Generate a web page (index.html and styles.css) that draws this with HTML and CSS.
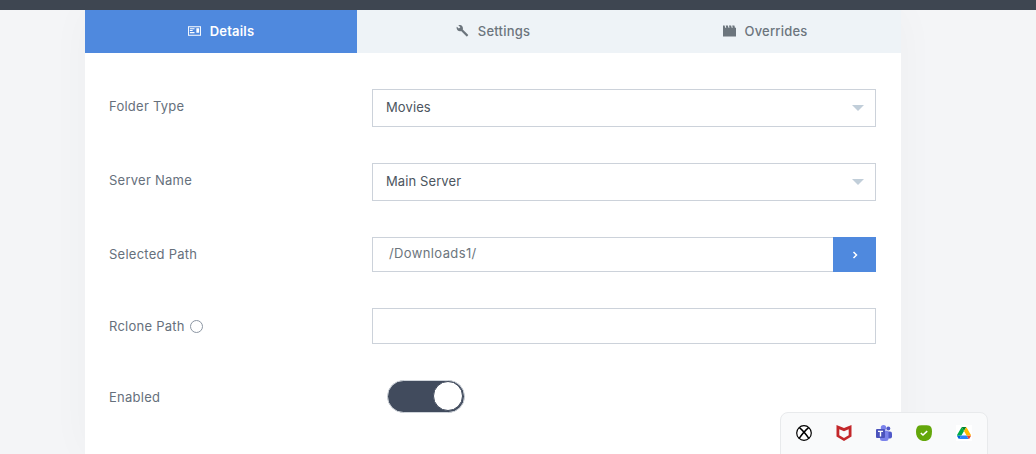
FILE: index.html
```html
<!DOCTYPE html>
<html lang="en">
<head>
<meta charset="utf-8">
<title>Details</title>
<link rel="stylesheet" href="styles.css">
</head>
<body>
<header class="topbar"></header>
<main class="card">
  <nav class="tabs">
    <a class="tab tab-active">
      <svg class="tab-icon" viewBox="0 0 14 12"><path fill="currentColor" fill-rule="evenodd" d="M0 1h14v10H0zM1 2v8h12V2zM2 3h5v1H2zM2 5h3v1H2zM2 7h5v1.500H2zM9 3h3v5H9z"/></svg>
      <span>Details</span>
    </a>
    <a class="tab">
      <svg class="tab-icon" viewBox="0 0 14 14"><path fill="currentColor" d="M13.500 11.300 7.300 5.200c.5-1.500.2-3-1-4.200C5.100-.1 3.500-.3 2.200.2l2.300 2.300-1.700 1.700L.4 1.900C-.2 3.200.1 4.900 1.200 6c1.200 1.200 2.800 1.500 4.200 1l6.100 6.200c.3.300.8.300 1 0l.9-.9c.3-.3.300-.7.100-1z"/></svg>
      <span>Settings</span>
    </a>
    <a class="tab">
      <svg class="tab-icon" viewBox="0 0 12 10"><path fill="currentColor" d="M0 0h1.500l.5 2h1L2.500 0h2l.5 2h1L5.500 0h2L8 2h1L8.500 0h2l.5 2h1v8H0z"/></svg>
      <span>Overrides</span>
    </a>
  </nav>
  <form class="form">
    <div class="row row-select">
      <label class="label label-select">Folder Type</label>
      <div class="field select"><span>Movies</span><i class="caret"></i></div>
    </div>
    <div class="row row-select">
      <label class="label label-select">Server Name</label>
      <div class="field select"><span>Main Server</span><i class="caret"></i></div>
    </div>
    <div class="row row-path">
      <label class="label">Selected Path</label>
      <div class="path">
        <div class="field path-input"><span>/Downloads1/</span></div>
        <button class="path-btn" type="button"><svg viewBox="0 0 6 8"><path d="M1.500 1 4.500 4 1.500 7" fill="none" stroke="#fff" stroke-width="1.500"/></svg></button>
      </div>
    </div>
    <div class="row row-rclone">
      <label class="label label-rclone">Rclone Path <i class="help"></i></label>
      <div class="field rclone"></div>
    </div>
    <div class="row row-toggle">
      <label class="label label-enabled">Enabled</label>
      <div class="toggle"><i class="knob"></i></div>
    </div>
  </form>
</main>
<aside class="tray">
  <svg class="tray-icon" viewBox="0 0 16 16"><circle cx="8" cy="8" r="7.300" fill="#fff" stroke="#000" stroke-width="1.200"/><path d="M3.400 2.600C5.500 4.300 10.300 9.700 13 13.600M12.600 2.600C10.500 4.300 5.700 9.700 3 13.600" fill="none" stroke="#000" stroke-width="1.500"/></svg>
  <svg class="tray-icon" viewBox="0 0 16 16"><path fill="#c3272b" d="M.5 0 8 3l7.500-3v11.500L8 16 .5 11.500zM3.300 4.300v5.900L8 13l4.700-2.800V4.300L8 6.300z"/></svg>
  <svg class="tray-icon" viewBox="0 0 16 16"><circle cx="12.300" cy="3.500" r="2" fill="#5059c9"/><circle cx="7.500" cy="2.700" r="2.700" fill="#7b83eb"/><rect x="10" y="6.500" width="6" height="7" rx="2" fill="#5059c9"/><rect x="4" y="5.500" width="8.500" height="10.500" rx="2.500" fill="#7b83eb"/><rect x="0" y="4" width="9" height="9" rx="1" fill="#4b53bc"/><path fill="#fff" d="M2 5.800h5v1.200H5.200v4.500H3.800V7H2z"/></svg>
  <svg class="tray-icon" viewBox="0 0 16 16"><path fill="#64a70b" d="M3 .5C6 0 11 0 13 .5s3 3 3 6c0 4-1 7-3.500 8.500s-6 1.500-8.500 0S0 10.500 0 7 1 1 3 .5z"/><path fill="none" stroke="#fff" stroke-width="1.600" d="M4.800 8 7 10l4.200-3.800"/></svg>
  <div class="drive-tile"><svg class="drive" viewBox="0 0 87.300 78"><path d="m6.600 66.850 3.850 6.650c.8 1.400 1.950 2.500 3.300 3.300l13.750-23.800h-27.500c0 1.550.4 3.100 1.200 4.500z" fill="#0066da"/><path d="m43.650 25-13.750-23.800c-1.350.8-2.500 1.900-3.300 3.300l-25.400 44a9.060 9.060 0 0 0 -1.200 4.500h27.500z" fill="#00ac47"/><path d="m73.550 76.800c1.350-.8 2.500-1.900 3.300-3.300l1.600-2.750 7.650-13.250c.8-1.400 1.200-2.950 1.200-4.500h-27.502l5.852 11.500z" fill="#ea4335"/><path d="m43.650 25 13.750-23.800c-1.350-.8-2.900-1.200-4.500-1.200h-18.500c-1.600 0-3.150.45-4.500 1.200z" fill="#00832d"/><path d="m59.800 53h-32.300l-13.750 23.800c1.350.8 2.900 1.200 4.500 1.200h50.800c1.600 0 3.150-.45 4.500-1.200z" fill="#2684fc"/><path d="m73.400 26.500-12.700-22c-.8-1.400-1.950-2.500-3.300-3.300l-13.750 23.800 16.150 28h27.450c0-1.550-.4-3.100-1.200-4.500z" fill="#ffba00"/></svg></div>
</aside>
</body>
</html>
```

FILE: styles.css
```css
* { box-sizing: border-box; }
html, body { margin: 0; height: 100%; }
body {
  width: 1036px;
  height: 454px;
  overflow: hidden;
  position: relative;
  background: #f4f5f7;
  font-family: "Inter", "Liberation Sans", sans-serif;
  font-size: 13px;
  color: #6c757d;
}
.topbar { height: 10px; background: #3e4651; position: relative; z-index: 1; }
.card { width: 816px; margin-left: 85px; background: #fff; height: 444px; box-shadow: 0 0 40px rgba(60, 60, 60, .03); }
.tabs { display: grid; grid-template-columns: 272px 272px 272px; height: 43px; background: #eef3f7; }
.tab { display: flex; align-items: center; justify-content: center; gap: 9px; font-weight: 500; color: #6c757d; letter-spacing: .2px; padding-bottom: 2px; }
.tab-active { background: #4f89de; color: #fff; font-weight: 600; }
.tab-icon { width: 13px; height: 12px; }
.form { padding: 36px 25px 0 24px; }
.row { display: grid; grid-template-columns: 263px 504px; align-items: center; }
.row-select { height: 38px; margin-bottom: 36px; }
.row-path { height: 35px; margin-bottom: 36px; }
.row-rclone { height: 36px; margin-bottom: 35px; }
.row-toggle { height: 34px; }
.label { display: flex; align-items: center; gap: 5px; font-weight: 400; color: #66707c; letter-spacing: .25px; position: relative; top: -1px; }
.label-select { top: -2px; }
.label-rclone { top: 0; }
.label-enabled { top: 1px; }
.field { height: 100%; border: 1px solid #ccd2da; background: #fff; color: #4c5560; display: flex; align-items: center; letter-spacing: .1px; padding-bottom: 2px; }
.select { padding: 0 11px 2px 13px; justify-content: space-between; }
.caret { width: 0; height: 0; border-left: 6px solid transparent; border-right: 6px solid transparent; border-top: 6px solid #c1ced9; position: relative; top: 1px; }
.path { display: flex; height: 100%; }
.path-input { flex: 1; padding-left: 16px; padding-bottom: 4px; border-right: 0; color: #6c757d; letter-spacing: .38px; }
.path-btn { width: 43px; border: 0; padding: 0; background: #4f89de; display: flex; align-items: center; justify-content: center; }
.path-btn svg { width: 6px; height: 8px; }
.help { width: 13px; height: 13px; border: 1px solid #8c96a3; border-radius: 50%; }
.toggle { width: 78px; height: 33px; margin-left: 15px; border-radius: 17px; background: #414b5d; border: 1px solid #cfd4da; display: flex; justify-content: flex-end; align-items: center; padding-right: 1px; }
.knob { width: 30px; height: 30px; border-radius: 50%; background: #fff; border: 1px solid #414b5d; }
.tray { position: absolute; left: 780px; top: 412px; width: 208px; height: 50px; background: #f9fafb; border: 1px solid #e8eaec; border-radius: 8px; display: flex; align-items: center; justify-content: space-between; padding: 0 15px 8px 15px; }
.tray-icon { width: 16px; height: 16px; }
.drive-tile { width: 16px; height: 16px; background: #fff; display: flex; align-items: center; justify-content: center; }
.drive { width: 14px; height: 12.500px; }
```
